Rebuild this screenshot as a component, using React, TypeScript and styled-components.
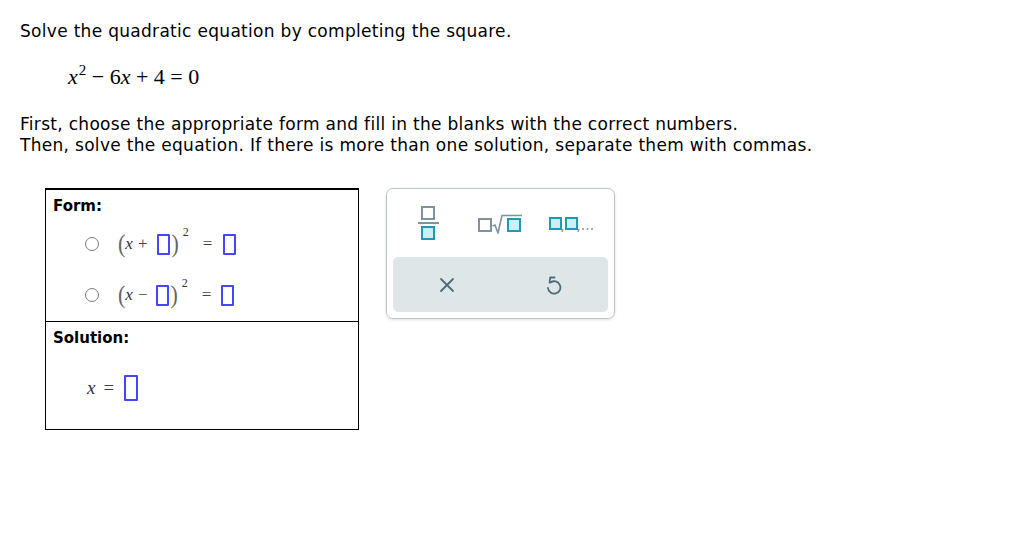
import React from 'react';
import styled, {createGlobalStyle} from 'styled-components';

const GlobalStyle = createGlobalStyle`
  body {
    margin: 0;
    background: #ffffff;
    font-family: "DejaVu Sans", Verdana, sans-serif;
    color: #000;
  }
`

const Page = styled.div`
  padding: 20px 0 0 20px;
  width: 1006px;
  height: 516px;
`

const Prompt = styled.p`
  margin: 0;
  font-size: 17px;
  letter-spacing: 0.3px;
  line-height: 22px;
`

const Equation = styled.div`
  margin: 23px 0 0 48px;
  font-family: "Liberation Serif", "Times New Roman", serif;
  font-size: 22px;
  line-height: 24px;
  i {
    font-style: italic;
  }
  sup {
    font-size: 15px;
    vertical-align: 9px;
    line-height: 0;
    margin-left: 1px;
  }
`

const Instructions = styled(Prompt)`
  margin-top: 25px;
  line-height: 21px;
`

const Work = styled.div`
  display: flex;
  align-items: flex-start;
  gap: 27px;
  margin: 32px 0 0 25px;
`

const AnswerTable = styled.div`
  width: 314px;
  box-sizing: border-box;
  border: 1px solid #000;
  border-top-width: 2px;
  display: flex;
  flex-direction: column;
`

const Cell = styled.div<{ $height: number, $divider?: boolean }>`
  height: ${p => p.$height}px;
  padding: 8px 7px 0;
  box-sizing: border-box;
  border-top: ${p => p.$divider ? '1px solid #000' : 'none'};
`

const CellLabel = styled.div`
  font-size: 15px;
  font-weight: bold;
  line-height: 16px;
`

const Options = styled.div`
  display: flex;
  flex-direction: column;
  gap: 27px;
  margin: 18px 0 0 32px;
`

const Option = styled.label`
  display: flex;
  align-items: center;
  height: 24px;
`

const Radio = styled.span`
  width: 12px;
  height: 12px;
  border: 1px solid #7a7a7a;
  border-radius: 50%;
  margin-right: 19px;
`

const Expr = styled.span`
  display: flex;
  align-items: center;
  font-family: "Liberation Serif", "Times New Roman", serif;
  font-size: 17px;
  color: #222;
`

const Var = styled.span`
  font-style: italic;
  color: #333;
`

const Paren = styled.span<{ $close?: boolean }>`
  font-size: 22px;
  color: #666;
  transform: scaleY(1.15);
  margin: ${p => p.$close ? '0 0 0 1px' : '0 0 0 0'};
`

const Op = styled.span<{ $before: number, $after: number }>`
  margin: 0 ${p => p.$after}px 0 ${p => p.$before}px;
  color: #444;
`

const Blank = styled.span<{ $big?: boolean }>`
  display: inline-block;
  width: ${p => p.$big ? 10 : 9}px;
  height: ${p => p.$big ? 22 : 17}px;
  border: 2px solid #4646ff;
  border-radius: 1px;
`

const Sup = styled.span`
  align-self: flex-start;
  font-size: 12px;
  margin: -6px 0 0 4px;
  color: #333;
`

const SolutionRow = styled.div`
  display: flex;
  align-items: center;
  height: 26px;
  margin: 29px 0 0 34px;
  font-family: "Liberation Serif", "Times New Roman", serif;
  font-size: 19px;
`

const Toolbox = styled.div`
  width: 229px;
  height: 131px;
  box-sizing: border-box;
  border: 1px solid #bcc6ca;
  border-radius: 7px;
  box-shadow: 0 1px 3px rgba(0, 0, 0, 0.12);
  padding: 15px 6px 6px;
  display: flex;
  flex-direction: column;
  justify-content: space-between;
`

const TemplateRow = styled.div`
  display: grid;
  grid-template-columns: 72px 72px 72px;
  align-items: center;
  justify-items: center;
  height: 40px;
`

const ActionBar = styled.div`
  height: 55px;
  background: #dfe6e8;
  border-radius: 5px;
  display: grid;
  grid-template-columns: 1fr 1fr;
  align-items: center;
  justify-items: center;
`

const grey = '#7d949c'
const teal = '#1a9db3'
const fill = '#cdeef4'
const ink = '#4a6d78'

function FractionIcon() {
    return (
        <svg width="24" height="36" viewBox="0 0 24 36">
            <rect x="5" y="1" width="12" height="12" fill="#fff" stroke={grey} strokeWidth="2"/>
            <line x1="1" y1="17" x2="22" y2="17" stroke={grey} strokeWidth="2"/>
            <rect x="5" y="21" width="12" height="12" fill={fill} stroke={teal} strokeWidth="2"/>
        </svg>
    )
}

function RootIcon() {
    return (
        <svg width="46" height="20" viewBox="0 0 46 20">
            <rect x="1" y="5" width="12" height="12" fill="#fff" stroke={grey} strokeWidth="2"/>
            <path d="M14.5 12 L17 11 L20 19 L24 1.5 H44" fill="none" stroke={grey} strokeWidth="1.6"/>
            <rect x="30" y="5" width="12" height="12" fill={fill} stroke={teal} strokeWidth="2"/>
        </svg>
    )
}

function ListIcon() {
    return (
        <svg width="48" height="20" viewBox="0 0 48 20">
            <rect x="1" y="4" width="11" height="11" fill={fill} stroke={teal} strokeWidth="2"/>
            <path d="M14 15 L13 18" stroke={grey} strokeWidth="1.3"/>
            <rect x="17" y="4" width="11" height="11" fill={fill} stroke={teal} strokeWidth="2"/>
            <path d="M30 15 L29 18" stroke={grey} strokeWidth="1.3"/>
            <circle cx="34" cy="15" r="1" fill={grey}/>
            <circle cx="38.5" cy="15" r="1" fill={grey}/>
            <circle cx="43" cy="15" r="1" fill={grey}/>
        </svg>
    )
}

function ClearIcon() {
    return (
        <svg width="16" height="16" viewBox="0 0 16 16">
            <path d="M2 2 L14 14 M14 2 L2 14" stroke={ink} strokeWidth="1.8" strokeLinecap="round"/>
        </svg>
    )
}

function UndoIcon() {
    return (
        <svg width="18" height="20" viewBox="0 0 18 20">
            <path d="M5.5 7.5 A6.2 6.2 0 1 1 3 13" fill="none" stroke={ink} strokeWidth="1.8" strokeLinecap="round"/>
            <path d="M9.5 2.5 L5.2 2.5 L4.6 7.5" fill="none" stroke={ink} strokeWidth="1.8" strokeLinecap="round" strokeLinejoin="round"/>
        </svg>
    )
}

export default function App() {
    return (
        <Page>
            <GlobalStyle/>
            <Prompt>Solve the quadratic equation by completing the square.</Prompt>
            <Equation>
                <i>x</i><sup>2</sup>&nbsp;−&nbsp;6<i>x</i>&nbsp;+&nbsp;4&nbsp;=&nbsp;0
            </Equation>
            <Instructions>
                First, choose the appropriate form and fill in the blanks with the correct numbers.<br/>
                Then, solve the equation. If there is more than one solution, separate them with commas.
            </Instructions>
            <Work>
                <AnswerTable>
                    <Cell $height={131}>
                        <CellLabel>Form:</CellLabel>
                        <Options>
                            <Option>
                                <Radio/>
                                <Expr>
                                    <Paren>(</Paren><Var>x</Var><Op $before={5} $after={10}>+</Op><Blank/>
                                    <Paren $close>)</Paren><Sup>2</Sup><Op $before={14} $after={11}>=</Op><Blank/>
                                </Expr>
                            </Option>
                            <Option>
                                <Radio/>
                                <Expr>
                                    <Paren>(</Paren><Var>x</Var><Op $before={5} $after={9}>−</Op><Blank/>
                                    <Paren $close>)</Paren><Sup>2</Sup><Op $before={14} $after={10}>=</Op><Blank/>
                                </Expr>
                            </Option>
                        </Options>
                    </Cell>
                    <Cell $height={108} $divider>
                        <CellLabel>Solution:</CellLabel>
                        <SolutionRow>
                            <Var>x</Var><Op $before={8} $after={10}>=</Op><Blank $big/>
                        </SolutionRow>
                    </Cell>
                </AnswerTable>
                <Toolbox>
                    <TemplateRow>
                        <FractionIcon/>
                        <RootIcon/>
                        <ListIcon/>
                    </TemplateRow>
                    <ActionBar>
                        <ClearIcon/>
                        <UndoIcon/>
                    </ActionBar>
                </Toolbox>
            </Work>
        </Page>
    );
}
